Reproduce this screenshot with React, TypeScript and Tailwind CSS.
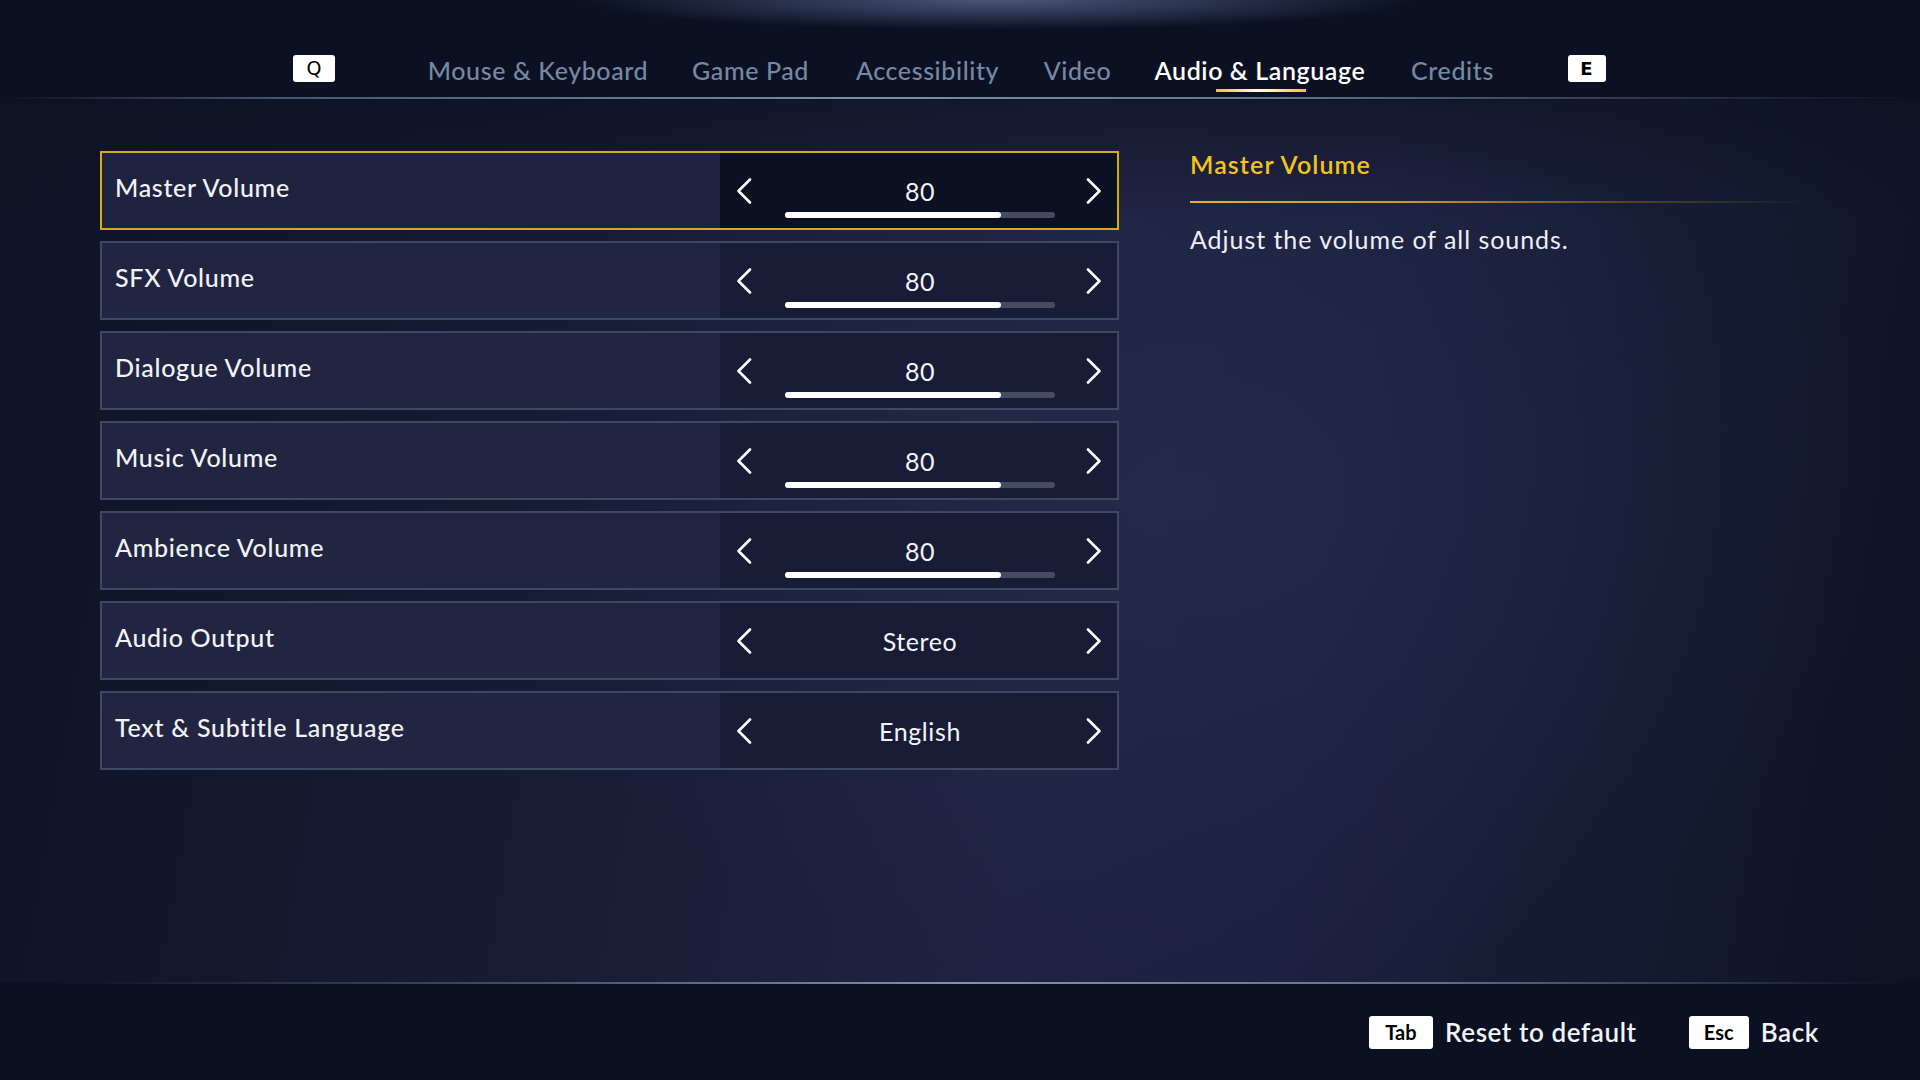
import React from "react";

const FONT = "font-['Lato','Noto_Sans',sans-serif]";

function Chevron({ dir }: { dir: "left" | "right" }) {
  return (
    <svg width="16" height="26" viewBox="0 0 16 26" fill="none">
      {dir === "left" ? (
        <polyline points="14,1.5 2.5,13 14,24.5" stroke="white" strokeWidth="2.6" strokeLinecap="round" strokeLinejoin="round" />
      ) : (
        <polyline points="2,1.5 13.5,13 2,24.5" stroke="white" strokeWidth="2.6" strokeLinecap="round" strokeLinejoin="round" />
      )}
    </svg>
  );
}

type Row = { label: string; value: string; slider?: number };

const rows: Row[] = [
  { label: "Master Volume", value: "80", slider: 80 },
  { label: "SFX Volume", value: "80", slider: 80 },
  { label: "Dialogue Volume", value: "80", slider: 80 },
  { label: "Music Volume", value: "80", slider: 80 },
  { label: "Ambience Volume", value: "80", slider: 80 },
  { label: "Audio Output", value: "Stereo" },
  { label: "Text & Subtitle Language", value: "English" },
];

const tabs = [
  { name: "Mouse & Keyboard", w: "w-[222px]" },
  { name: "Game Pad", w: "w-[120px]" },
  { name: "Accessibility", w: "w-[151px]" },
  { name: "Video", w: "w-[66px]" },
  { name: "Audio & Language", w: "w-[216px]", active: true },
  { name: "Credits", w: "w-[86px]" },
];

export default function App() {
  return (
    <div
      className={`w-[1920px] h-[1080px] overflow-hidden flex flex-col text-white ${FONT} bg-[#0c1122]`}
    >
      {/* Header */}
      <div className="relative h-[100px] shrink-0 bg-[#0b1122]">
        <div className="absolute inset-x-0 top-0 h-[40px] bg-[radial-gradient(ellipse_420px_30px_at_52%_0%,#4a5574_0%,#2d3654_45%,rgba(11,17,34,0)_100%)]" />
        <div className="relative flex items-center pt-[55px] h-[82px] pl-[293px]">
          <div className="w-[42px] h-[27px] bg-white rounded-[3px] flex items-center justify-center text-black text-[19px] font-['DejaVu_Sans',sans-serif]">
            Q
          </div>
          <div className="flex ml-[92px] gap-[41.5px] h-[27px] items-center">
            {tabs.map((t) => (
              <div key={t.name} className={`relative ${t.w} flex justify-center pt-[5px]`}>
                <span
                  className={`whitespace-nowrap text-[25px] tracking-[0.6px] ${
                    t.active ? "text-white font-semibold" : "text-[#7688a3] font-medium"
                  }`}
                >
                  {t.name}
                </span>
                {t.active && (
                  <div className="absolute left-[64px] top-[42px] w-[90px] h-[3px] bg-[linear-gradient(90deg,#f6c21c,#fffbe6_45%,#fff3c4_60%,#f6c21c)]" />
                )}
              </div>
            ))}
          </div>
          <div className="ml-[72px] w-[38px] h-[27px] bg-white rounded-[3px] flex items-center justify-center text-black text-[18px] font-bold font-['DejaVu_Sans',sans-serif]">
            E
          </div>
        </div>
        <div className="absolute left-0 right-0 top-[97px] h-[2px] bg-[linear-gradient(90deg,rgba(70,82,108,0)_0%,#4a5670_15%,#7e8ca8_45%,#6a7794_65%,#2f384f_85%,rgba(30,36,55,0)_100%)]" />
      </div>

      {/* Main */}
      <div className="relative flex-1 bg-[linear-gradient(100deg,#0e1326_0%,#171b34_30%,#1f2341_55%,#1d2140_68%,#141a31_85%,#0d1224_100%)]">
        <div className="absolute inset-0 bg-[radial-gradient(ellipse_700px_500px_at_62%_45%,rgba(42,47,82,0.55),rgba(42,47,82,0)_100%)]" />
        <div className="absolute inset-x-0 top-0 h-[120px] bg-[linear-gradient(180deg,rgba(12,17,34,0.6),rgba(12,17,34,0))]" />
        <div className="relative flex pl-[100px] pt-[51px]">
          <div className="w-[1019px] flex flex-col gap-[11px]">
            {rows.map((r, i) => {
              const sel = i === 0;
              return (
                <div
                  key={r.label}
                  className={`h-[79px] flex border-2 ${
                    sel ? "border-[#d8aa18] bg-[#1f2340]" : "border-[#3f4863] bg-[#212541]"
                  }`}
                >
                  <div className="flex-1 flex items-center pl-[13px] pb-[6px]">
                    <span className="text-[25px] tracking-[0.7px] font-medium text-[#f2f3f7]">{r.label}</span>
                  </div>
                  <div
                    className={`relative w-[397px] flex items-center justify-between pl-[16px] pr-[15px] ${
                      sel ? "bg-[#0b1022]" : "bg-[#191c36]"
                    }`}
                  >
                    <Chevron dir="left" />
                    <span className="text-[25px] tracking-[0.6px] text-[#f4f5f8] pt-[2px] pl-[2px]">{r.value}</span>
                    <Chevron dir="right" />
                    {r.slider !== undefined && (
                      <div className="absolute left-[65px] top-[59px] w-[270px] h-[6px] rounded-full bg-[#464c60]">
                        <div className="h-full rounded-full bg-white" style={{ width: `${r.slider}%` }} />
                      </div>
                    )}
                  </div>
                </div>
              );
            })}
          </div>

          <div className="ml-[71px] w-[620px] flex flex-col">
            <div className="text-[25px] leading-[30px] font-semibold tracking-[1.1px] text-[#f6c417] -mt-[2px]">Master Volume</div>
            <div className="mt-[22px] h-[2px] bg-[linear-gradient(90deg,#e7b414_0%,#c99d18_35%,rgba(140,110,30,0.5)_70%,rgba(100,80,30,0)_100%)]" />
            <div className="mt-[20px] text-[25px] leading-[32px] tracking-[0.95px] text-[#eef0f5]">
              Adjust the volume of all sounds.
            </div>
          </div>
        </div>
      </div>

      {/* Footer line */}
      <div className="h-[2px] shrink-0 bg-[linear-gradient(90deg,rgba(30,40,60,0)_2%,#3d4a60_25%,#8093b4_50%,#5f6e8a_75%,rgba(30,40,60,0)_99%)]" />

      {/* Footer */}
      <div className="h-[96px] shrink-0 bg-[#0b1122] flex items-center justify-end pr-[101px]">
        <div className="w-[64px] h-[33px] bg-white rounded-[3px] flex items-center justify-center text-black text-[20px] font-bold">
          Tab
        </div>
        <span className="ml-[12px] text-[26px] font-semibold tracking-[0.6px] text-[#f2f3f7]">Reset to default</span>
        <div className="ml-[52px] w-[60px] h-[33px] bg-white rounded-[3px] flex items-center justify-center text-black text-[20px] font-bold">
          Esc
        </div>
        <span className="ml-[12px] text-[26px] font-semibold tracking-[0.6px] text-[#f2f3f7]">Back</span>
      </div>
    </div>
  );
}
